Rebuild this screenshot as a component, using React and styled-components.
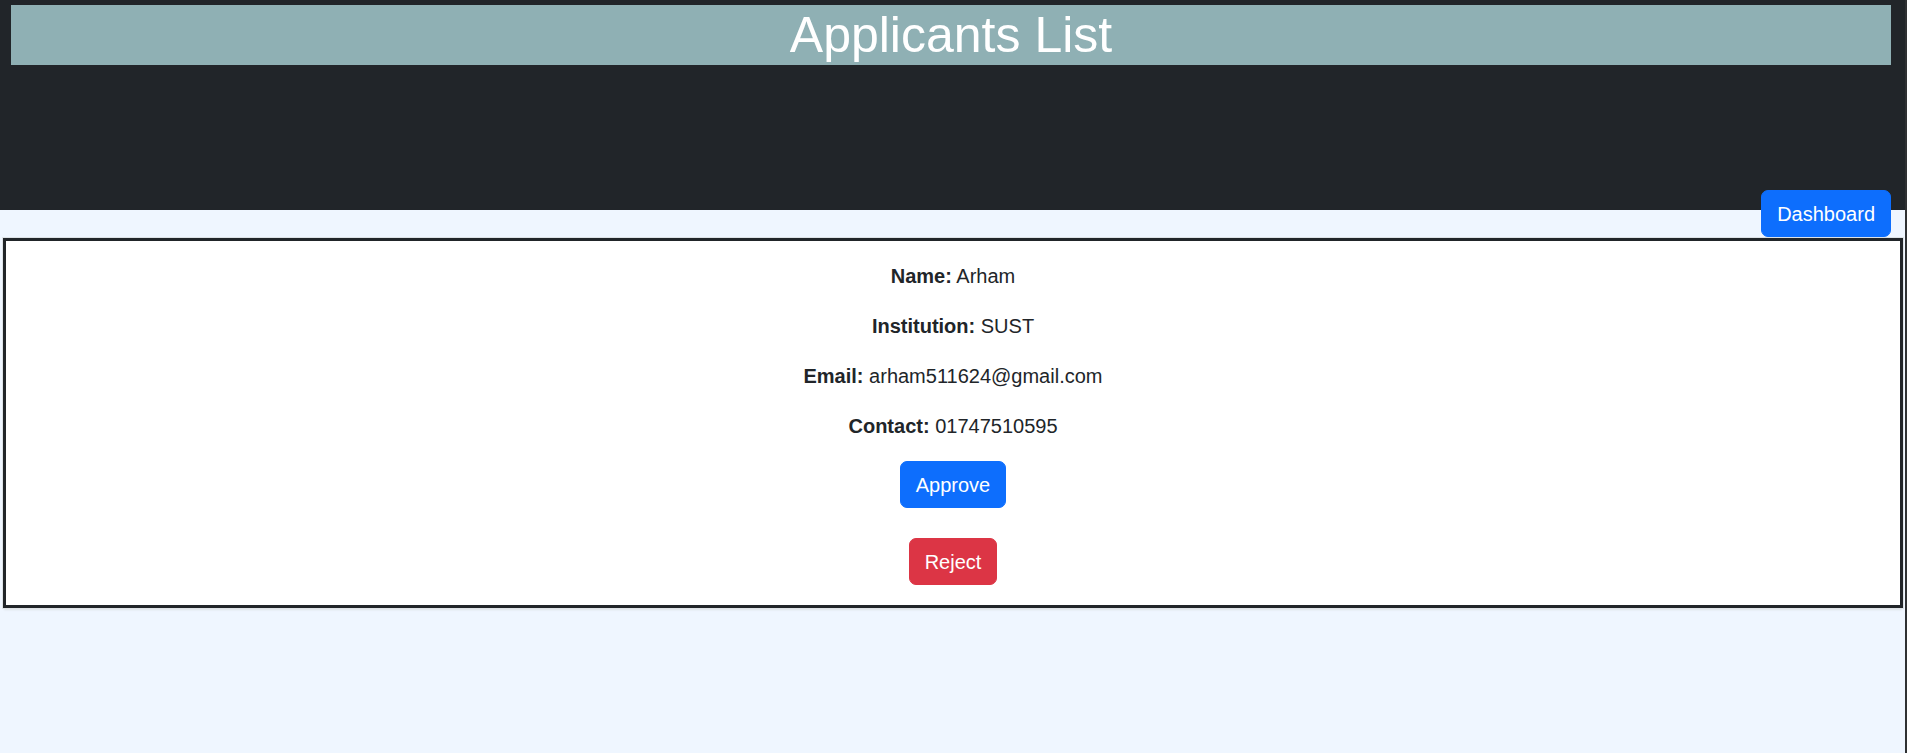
import React from "react";
import styled, { createGlobalStyle } from "styled-components";

const Global = createGlobalStyle`
  html, body { margin: 0; padding: 0; }
  body {
    background: #2f3133;
    font-family: "Liberation Sans", Arial, sans-serif;
    color: #212529;
  }
  #root { margin-right: 2px; }
`;

const Page = styled.div`
  min-height: 753px;
  background: #eff6ff;
  display: flex;
  flex-direction: column;
`;

const Header = styled.header`
  height: 210px;
  background: #212529;
  padding: 5px 14px 0 11px;
  box-sizing: border-box;
`;

const Title = styled.h1`
  margin: 0;
  height: 60px;
  background: #8fb0b4;
  color: #ffffff;
  font-size: 50px;
  font-weight: 400;
  line-height: 60px;
  text-align: center;
`;

const TopBar = styled.div`
  display: flex;
  justify-content: flex-end;
  margin-top: -20px;
  padding-right: 14px;
`;

const Button = styled.button`
  font-family: "Liberation Sans", Arial, sans-serif;
  font-size: 20px;
  line-height: 30px;
  padding: 7.5px 15px;
  border: 1px solid ${(p) => p.$bg};
  border-radius: 7px;
  background: ${(p) => p.$bg};
  color: #ffffff;
  cursor: pointer;
`;

const Card = styled.section`
  margin: 1px 2px 0 3px;
  border: 3px solid #212529;
  background: #ffffff;
  box-shadow: 0 0 0 1px #dde2e6, 0 3px 2px -1px #dde2e6;
  padding: 20px 0;
  display: flex;
  flex-direction: column;
  align-items: center;
`;

const Field = styled.p`
  margin: 0 0 20px;
  font-size: 20px;
  line-height: 30px;
  text-align: center;
`;

const Label = styled.strong`
  font-weight: 700;
`;

const Actions = styled.div`
  display: flex;
  flex-direction: column;
  align-items: center;
  gap: 30px;
`;

const applicant = {
  name: "Arham",
  institution: "SUST",
  email: "arham511624@gmail.com",
  contact: "01747510595",
};

export default function App() {
  return (
    <>
      <Global />
      <Page>
        <Header>
          <Title>Applicants List</Title>
        </Header>
        <TopBar>
          <Button $bg="#0d6efd">Dashboard</Button>
        </TopBar>
        <Card>
          <Field>
            <Label>Name:</Label> {applicant.name}
          </Field>
          <Field>
            <Label>Institution:</Label> {applicant.institution}
          </Field>
          <Field>
            <Label>Email:</Label> {applicant.email}
          </Field>
          <Field>
            <Label>Contact:</Label> {applicant.contact}
          </Field>
          <Actions>
            <Button $bg="#0d6efd">Approve</Button>
            <Button $bg="#dc3545">Reject</Button>
          </Actions>
        </Card>
      </Page>
    </>
  );
}
